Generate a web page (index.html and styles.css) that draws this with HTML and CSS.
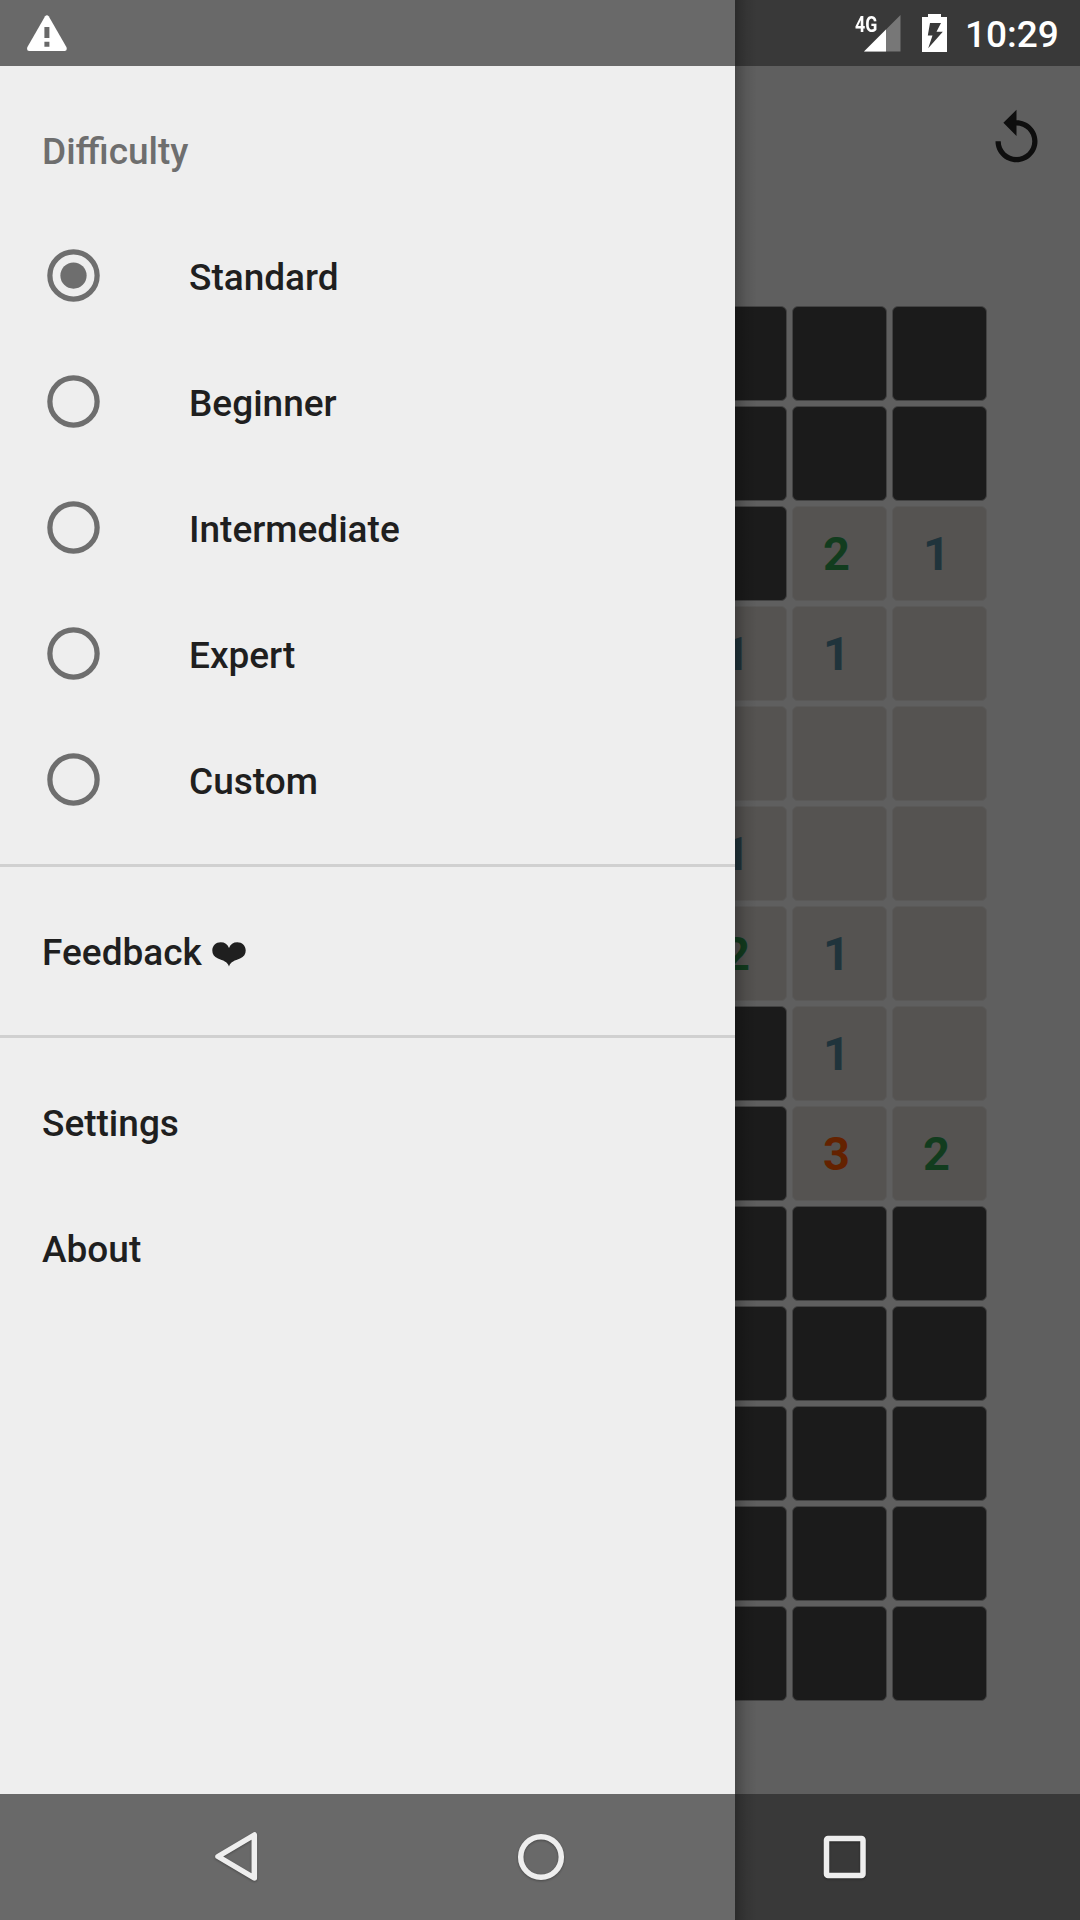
FILE: index.html
```html
<!DOCTYPE html>
<html lang="en">
<head>
<meta charset="utf-8">
<title>Minesweeper</title>
<link rel="stylesheet" href="styles.css">
</head>
<body>
<div class="screen">
  <div class="status status-left">
    <svg class="warning" viewBox="0 0 42 38"><path d="M19.1 1.2Q20.9-.6 22.7 1.2L40.5 32.3Q41.5 36 38.6 36H3.1Q.4 36 1.3 32.3Z" fill="#fff"/><path d="M18.4 12h5v11h-5zM18.4 26.8h5v4.9h-5z" fill="#696969"/></svg>
  </div>
  <div class="status status-right">
    <span class="network">4G</span>
    <svg class="signal" viewBox="0 0 37 38"><path d="M36.5 1V37.5H0Z" fill="#777"/><path d="M22 15.500V37.500H0Z" fill="#fff"/></svg>
    <svg class="battery" viewBox="0 0 25 38"><path d="M6 0H19V3H25V38H0V3H6Z" fill="#fff"/><path d="M8 9H19L14.500 17.700H20.800L6.200 34.200L10.500 21.500H5.800Z" fill="#393939"/></svg>
    <span class="clock">10:29</span>
  </div>

  <nav class="drawer">
    <div class="group">
      <div class="item">
        <span class="heading">Difficulty</span>
      </div>
      <div class="item choice"><svg class="radio" viewBox="0 0 24 24"><circle cx="12" cy="12" r="9"/><circle class="dot" cx="12" cy="12" r="5"/></svg><span>Standard</span></div>
      <div class="item choice"><svg class="radio" viewBox="0 0 24 24"><circle cx="12" cy="12" r="9"/></svg><span>Beginner</span></div>
      <div class="item choice"><svg class="radio" viewBox="0 0 24 24"><circle cx="12" cy="12" r="9"/></svg><span>Intermediate</span></div>
      <div class="item choice"><svg class="radio" viewBox="0 0 24 24"><circle cx="12" cy="12" r="9"/></svg><span>Expert</span></div>
      <div class="item choice"><svg class="radio" viewBox="0 0 24 24"><circle cx="12" cy="12" r="9"/></svg><span>Custom</span></div>
    </div>
    <div class="group">
      <div class="item"><span>Feedback</span><svg class="heart" viewBox="0 0 34 25"><path d="M17 24.500C15.500 19.500 11 18.500 6 16.500C2 14.700.3 12 .3 8.500C.3 3.700 4 .3 8.700.3C12.700.3 15.600 2.300 17 6C18.400 2.300 21.300.3 25.300.3C30 .3 33.700 3.700 33.700 8.500C33.700 12 32 14.700 28 16.500C23 18.500 18.500 19.500 17 24.500Z"/></svg></div>
    </div>
    <div class="group">
      <div class="item"><span>Settings</span></div>
      <div class="item"><span>About</span></div>
    </div>
  </nav>

  <main class="game">
    <div class="toolbar">
      <svg class="restart" viewBox="0 0 24 24"><path d="M12 5V1L7 6l5 5V7c3.310 0 6 2.690 6 6s-2.690 6-6 6-6-2.690-6-6H4c0 4.420 3.580 8 8 8s8-3.580 8-8-3.580-8-8-8z"/></svg>
    </div>
    <div class="board">
      <i class="tile"></i><i class="tile"></i><i class="tile"></i>
      <i class="tile"></i><i class="tile"></i><i class="tile"></i>
      <i class="tile"></i><b class="tile open two">2</b><b class="tile open one">1</b>
      <b class="tile open one">1</b><b class="tile open one">1</b><i class="tile open"></i>
      <i class="tile open"></i><i class="tile open"></i><i class="tile open"></i>
      <b class="tile open one">1</b><i class="tile open"></i><i class="tile open"></i>
      <b class="tile open two">2</b><b class="tile open one">1</b><i class="tile open"></i>
      <i class="tile"></i><b class="tile open one">1</b><i class="tile open"></i>
      <i class="tile"></i><b class="tile open three">3</b><b class="tile open two">2</b>
      <i class="tile"></i><i class="tile"></i><i class="tile"></i>
      <i class="tile"></i><i class="tile"></i><i class="tile"></i>
      <i class="tile"></i><i class="tile"></i><i class="tile"></i>
      <i class="tile"></i><i class="tile"></i><i class="tile"></i>
      <i class="tile"></i><i class="tile"></i><i class="tile"></i>
    </div>
  </main>

  <div class="keys keys-left">
    <svg class="back" viewBox="0 0 46 52"><path d="M40.300 4V47L4 25.500Z"/></svg>
    <svg class="home" viewBox="0 0 48 48"><circle cx="24" cy="24" r="20.300"/></svg>
  </div>
  <div class="keys keys-right">
    <svg class="recents" viewBox="0 0 44 44"><rect x="3.500" y="3.500" width="36.500" height="37" rx="1.500"/></svg>
  </div>
  <div class="edge-shadow"></div>
</div>
</body>
</html>
```
FILE: styles.css
```css
* { box-sizing: border-box; }
body { margin: 0; font-family: Roboto, sans-serif; }
svg { display: block; flex: none; }

.screen {
  position: relative;
  display: grid;
  grid-template-columns: 735px 345px;
  grid-template-rows: 66px 1728px 126px;
  width: 1080px;
  height: 1920px;
  overflow: hidden;
}

/* Status bar */
.status { display: flex; color: #fff; }
.status-left { background: #696969; padding: 15px 0 0 26px; }
.status-right { background: #393939; padding-left: 120px; }
.warning { width: 42px; height: 38px; }
.network {
  width: 9px;
  margin-top: 12px;
  font-size: 22.500px;
  line-height: 24px;
  font-weight: 700;
  white-space: nowrap;
  transform: scaleX(.79);
  transform-origin: left;
}
.signal { width: 37px; height: 38px; margin-top: 14px; }
.battery { width: 25px; height: 38px; margin: 14px 0 0 21px; }
.clock {
  margin: 13px 0 0 18px;
  font-size: 37px;
  line-height: 43px;
  font-weight: 500;
}

/* Drawer */
.drawer { background: #eee; color: #1f1f1f; font-size: 37px; font-weight: 500; }
.group { padding: 21px 0; }
.group + .group { border-top: 3px solid #d0d0d0; }
.item { display: flex; align-items: center; height: 126px; padding-left: 42px; }
.item span { padding-top: 2px; }
.item .heading { color: #6e6e6e; }
.choice { gap: 84px; }
.radio { width: 63px; height: 63px; margin-bottom: 1px; fill: none; stroke: #6e6e6e; stroke-width: 2; }
.radio .dot { fill: #6e6e6e; stroke: none; }
.heart { width: 34px; height: 25px; margin: 7px 0 0 10px; fill: #1f1f1f; }

/* Game */
.game { background: #5f5f5f; overflow: hidden; }
.toolbar { display: flex; justify-content: flex-end; height: 240px; padding: 41px 32px 0 0; }
.restart { width: 63px; height: 63px; fill: #0e0e0e; }
.board {
  display: grid;
  grid-template-columns: repeat(3, 95px);
  grid-auto-rows: 95px;
  gap: 5px;
  justify-content: end;
  padding: 0 93px 0 0;
}
.tile {
  display: flex;
  align-items: center;
  justify-content: center;
  border-radius: 6px;
  background: #1b1b1b;
  border: 1px solid #434343;
  font-size: 47px;
  font-weight: 700;
  line-height: 92px;
  padding: 1px 6px 0 0;
}
.open { background: #555351; border-color: #5a5958; }
.one { color: #20343c; }
.two { color: #123c1e; }
.three { color: #642200; }

/* Navigation keys */
.keys { display: flex; align-items: flex-start; }
.keys svg { fill: none; stroke: #eee; stroke-width: 5.500px; stroke-linejoin: round; filter: drop-shadow(0 1px 1px rgba(0, 0, 0, .3)); }
.keys-left { background: #696969; padding: 37px 0 0 214px; }
.keys-right { background: #393939; padding: 41px 0 0 88px; }
.back { width: 46px; height: 52px; }
.home { width: 48px; height: 48px; margin: 2px 0 0 256.500px; }
.recents { width: 44px; height: 44px; }

.edge-shadow {
  position: absolute;
  left: 735px;
  top: 0;
  width: 22px;
  height: 100%;
  background: linear-gradient(90deg, rgba(0, 0, 0, .25), rgba(0, 0, 0, .08) 50%, transparent);
}
```
